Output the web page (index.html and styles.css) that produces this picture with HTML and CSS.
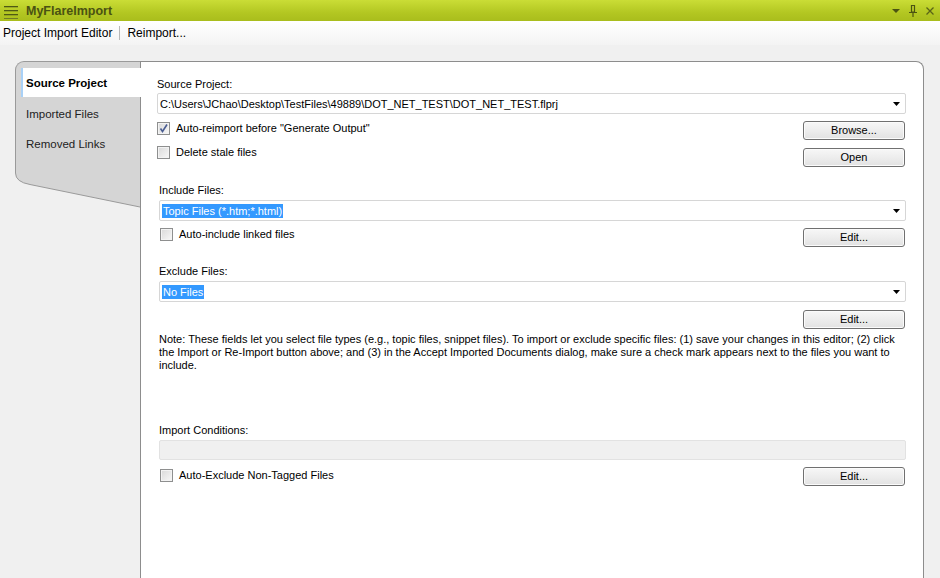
FILE: index.html
```html
<!DOCTYPE html>
<html>
<head>
<meta charset="utf-8">
<link rel="stylesheet" href="styles.css">
</head>
<body>
<div class="app">
  <header class="titlebar">
    <svg class="menu-icon" width="16" height="16" viewBox="0 0 16 16">
      <rect x="1" y="3" width="14" height="1.3" fill="#4f5914"/>
      <rect x="1" y="7" width="14" height="1.3" fill="#4f5914"/>
      <rect x="1" y="11" width="14" height="1.3" fill="#4f5914"/>
      <rect x="1" y="15" width="14" height="1" fill="#6f7a26"/>
    </svg>
    <span class="title">MyFlareImport</span>
    <div class="win-icons">
      <svg width="10" height="6" viewBox="0 0 10 6"><path d="M1 1 H9 L5 5 Z" fill="#4b5412"/></svg>
      <svg width="10" height="14" viewBox="0 0 10 14"><path d="M3.5 1.5 H6.5 V8 H3.5 Z M1 8.5 H9 M5 8.5 V13" fill="none" stroke="#4b5412" stroke-width="1.2"/></svg>
      <svg width="10" height="10" viewBox="0 0 10 10"><path d="M1.5 1.5 L8.5 8.5 M8.5 1.5 L1.5 8.5" stroke="#5a6418" stroke-width="1.3"/></svg>
    </div>
  </header>
  <nav class="toolbar">
    <span class="tool">Project Import Editor</span>
    <span class="tool-sep"></span>
    <span class="tool">Reimport...</span>
  </nav>
  <main class="workspace">
    <aside class="tabcol">
      <div class="tabs">
        <div class="tab active">Source Project</div>
        <div class="tab">Imported Files</div>
        <div class="tab">Removed Links</div>
      </div>
      <svg class="tabs-foot" width="125" height="40" viewBox="0 0 125 40">
        <path d="M0 0 H0.5 V4 Q0.5 13 15 15.5 L125 38 V0 Z" fill="#d5d5d5"/>
        <path d="M0.5 0 V4 Q0.5 13 15 15.5 L125 38" fill="none" stroke="#9a9a9a" stroke-width="1"/>
      </svg>
    </aside>
    <section class="panel">
      <div class="sec sec-first">
        <div class="lbl">Source Project:</div>
        <div class="combo"><span class="val">C:\Users\JChao\Desktop\TestFiles\49889\DOT_NET_TEST\DOT_NET_TEST.flprj</span>
          <svg class="arrow" width="7" height="4" viewBox="0 0 7 4"><path d="M0 0 H7 L3.5 4 Z" fill="#000"/></svg>
        </div>
        <div class="opts">
          <div class="checks">
            <label class="chk"><span class="cb"><svg width="11" height="11" viewBox="0 0 11 11"><path d="M2.5 5.5 L4.5 8.5 L9 1.5" fill="none" stroke="#4a5d92" stroke-width="1.6"/></svg></span>Auto-reimport before "Generate Output"</label>
            <label class="chk"><span class="cb"></span>Delete stale files</label>
          </div>
          <div class="btns">
            <button class="btn">Browse...</button>
            <button class="btn">Open</button>
          </div>
        </div>
      </div>

      <div class="sec sec-include">
        <div class="lbl">Include Files:</div>
        <div class="combo"><span class="val sel">Topic Files (*.htm;*.html)</span>
          <svg class="arrow" width="7" height="4" viewBox="0 0 7 4"><path d="M0 0 H7 L3.5 4 Z" fill="#000"/></svg>
        </div>
        <div class="row">
          <label class="chk"><span class="cb"></span>Auto-include linked files</label>
          <button class="btn">Edit...</button>
        </div>
      </div>

      <div class="sec sec-exclude">
        <div class="lbl">Exclude Files:</div>
        <div class="combo"><span class="val sel">No Files</span>
          <svg class="arrow" width="7" height="4" viewBox="0 0 7 4"><path d="M0 0 H7 L3.5 4 Z" fill="#000"/></svg>
        </div>
        <div class="row row-end">
          <button class="btn">Edit...</button>
        </div>
        <p class="note">Note: These fields let you select file types (e.g., topic files, snippet files). To import or exclude specific files: (1) save your changes in this editor; (2) click the Import or Re-Import button above; and (3) in the Accept Imported Documents dialog, make sure a check mark appears next to the files you want to include.</p>
      </div>

      <div class="sec sec-cond">
        <div class="lbl">Import Conditions:</div>
        <div class="cond-box"></div>
        <div class="row row-cond">
          <label class="chk"><span class="cb"></span>Auto-Exclude Non-Tagged Files</label>
          <button class="btn">Edit...</button>
        </div>
      </div>
    </section>
  </main>
</div>
</body>
</html>
```
FILE: styles.css
```css
* { box-sizing: border-box; }
html, body { margin: 0; padding: 0; }
body {
  width: 940px;
  height: 578px;
  overflow: hidden;
  font-family: "Liberation Sans", Arial, sans-serif;
  font-size: 11px;
  color: #000;
  background: #f0f0f0;
}
.app { display: flex; flex-direction: column; height: 578px; }

.titlebar {
  height: 21px;
  display: flex;
  align-items: center;
  background: linear-gradient(#cadd36, #b3c722 60%, #a9bd1c);
  padding-left: 3px;
  flex: none;
}
.menu-icon { display: block; margin-top: 1px; }
.title {
  margin-left: 7px;
  font-weight: bold;
  font-size: 12.5px;
  color: #4a5212;
}
.win-icons {
  margin-left: auto;
  display: flex;
  align-items: center;
  gap: 7px;
  padding-right: 5px;
}
.win-icons svg { display: block; }

.toolbar {
  height: 24px;
  flex: none;
  display: flex;
  align-items: center;
  padding-left: 3px;
  background: linear-gradient(#ffffff, #f3f3f3);
  font-size: 12px;
}
.tool-sep {
  width: 1px;
  height: 14px;
  background: #b8b8b8;
  margin: 0 7px 0 7px;
}

.workspace {
  flex: 1;
  display: flex;
  padding: 16px 16px 0 15px;
  min-height: 0;
}

.tabcol {
  width: 125px;
  flex: none;
  display: flex;
  flex-direction: column;
}
.tabs {
  height: 108px;
  background: #d5d5d5;
  border-left: 1px solid #9a9a9a;
  border-top: 1px solid #9a9a9a;
  border-top-left-radius: 9px;
  padding: 6px 0 0 5px;
}
.tabs-foot { display: block; }
.tab {
  height: 30px;
  line-height: 33px;
  padding-left: 5px;
  font-size: 11.5px;
  color: #222;
}
.tab.active {
  position: relative;
  z-index: 1;
  margin-right: -1px;
  background: #fff;
  font-weight: bold;
  color: #000;
  border-left: 2px solid #a9d1f7;
  padding-left: 3px;
  height: 29px;
  line-height: 31px;
  margin-bottom: 1px;
}

.panel {
  flex: 1;
  background: #fff;
  border: 1px solid #8d8d8d;
  border-bottom: none;
  border-top-right-radius: 8px;
  padding: 0 17px 0 16px;
}

.lbl { line-height: 13px; height: 13px; }
.sec-first .lbl { margin-top: 16px; }
.combo {
  height: 21px;
  border: 1px solid #d6d6d6;
  border-radius: 2px;
  display: flex;
  align-items: center;
  padding-left: 2px;
  padding-right: 5px;
  margin-top: 2px;
  background: #fff;
}
.val { line-height: 14px; white-space: nowrap; }
.val.sel { background: #3399ff; color: #fff; padding: 0 1px; }
.arrow { margin-left: auto; display: block; }

.opts {
  display: flex;
  justify-content: space-between;
  margin-top: 7px;
}
.checks {
  display: flex;
  flex-direction: column;
  gap: 11px;
  padding-top: 1px;
}
.btns {
  display: flex;
  flex-direction: column;
  gap: 8px;
  margin-right: 1px;
}
.chk {
  display: flex;
  align-items: center;
  height: 13px;
  line-height: 13px;
}
.cb {
  width: 13px;
  height: 13px;
  border: 1px solid #8e8f8f;
  background: linear-gradient(135deg, #d9d9d9, #f8f8f8);
  box-shadow: inset 0 0 0 1px #f3f3f3;
  margin-right: 6px;
  display: flex;
  align-items: center;
  justify-content: center;
  flex: none;
}
.cb svg { display: block; }

.btn {
  width: 102px;
  height: 19px;
  padding: 0;
  border: 1px solid #707070;
  border-radius: 3px;
  background: linear-gradient(#f7f7f7, #ededed 50%, #e2e2e2);
  box-shadow: inset 0 0 0 1px #fbfbfb;
  font-family: "Liberation Sans", Arial, sans-serif;
  font-size: 11px;
  color: #000;
  line-height: 17px;
}

.sec-include, .sec-exclude, .sec-cond { padding-left: 2px; }
.sec-include .lbl { margin-top: 17px; }
.sec-include .combo, .sec-exclude .combo { margin-top: 3px; }
.row {
  display: flex;
  justify-content: space-between;
  align-items: flex-start;
  margin-top: 7px;
  padding-right: 1px;
}
.row .chk { margin-left: 1px; }
.row-end { justify-content: flex-end; margin-top: 8px; }
.sec-exclude .lbl { margin-top: 18px; }
.note {
  margin: 4px 0 0 0;
  line-height: 13px;
  padding-right: 8px;
}
.sec-cond .lbl { margin-top: 52px; }
.cond-box {
  height: 20px;
  margin-top: 3px;
  background: #f0f0f0;
  border: 1px solid #e2e2e2;
  border-radius: 2px;
}
.row-cond .chk { margin-top: 2px; }
```
